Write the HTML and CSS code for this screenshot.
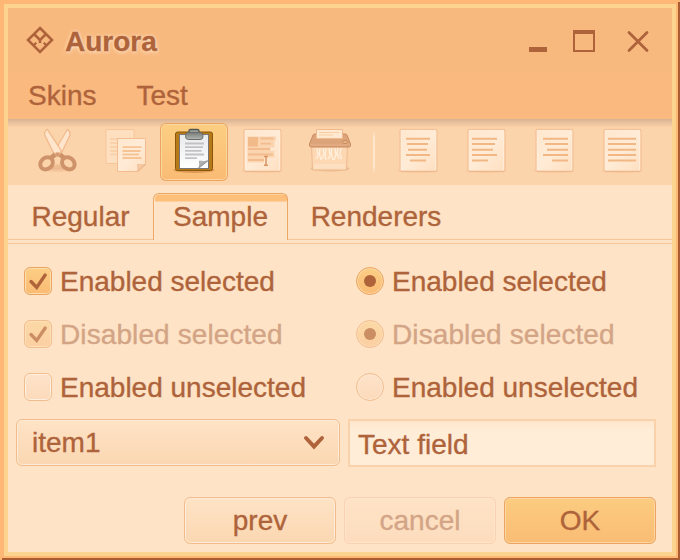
FILE: index.html
```html
<!DOCTYPE html>
<html lang="en">
<head>
<meta charset="utf-8">
<title>Aurora</title>
<link rel="stylesheet" href="styles.css">
</head>
<body>
<div class="window">
<div class="frame">
  <header class="header">
    <div class="titlebar">
      <svg class="logo" width="28" height="28" viewBox="0 0 28 28" fill="none" stroke="#ae633b" stroke-width="2.6">
        <path d="M14 2 26 14 14 26 2 14Z"/><path d="M8 8 14 14 20 8M14 13v4"/><path d="M7.500 19.500 10.300 16.800M20.500 19.500 17.700 16.800" stroke-width="2.200"/>
      </svg>
      <h1 class="title">Aurora</h1>
      <svg class="controls" width="124" height="28" viewBox="0 0 124 28" fill="none" stroke="#ae633b">
        <path d="M1 21.500H19" stroke-width="5"/>
        <path d="M46 3.500V23H66V3.500" stroke-width="2"/><path d="M45 4H67" stroke-width="4"/>
        <path d="M101 4.500 119 22.500M119 4.500 101 22.500" stroke-width="2.800" stroke-linecap="round"/>
      </svg>
    </div>
    <nav class="menu"><span>Skins</span><span>Test</span></nav>
  </header>

  <svg width="0" height="0" class="defs">
    <defs>
      <linearGradient id="page" x1="0" y1="0" x2="1" y2="1"><stop offset="0" stop-color="#ffe7ce"/><stop offset=".5" stop-color="#ffebd6"/><stop offset="1" stop-color="#fedfbf"/></linearGradient>
      <linearGradient id="white" x1="0" y1="0" x2="0" y2="1"><stop offset="0" stop-color="#e9eaec"/><stop offset="1" stop-color="#fff"/></linearGradient>
      <linearGradient id="metal" x1="0" y1="0" x2="0" y2="1"><stop offset="0" stop-color="#777a77"/><stop offset="1" stop-color="#b4b8b4"/></linearGradient>
      <linearGradient id="curl" x1="0" y1="0" x2="1" y2="1"><stop offset="0" stop-color="#fbd9b5"/><stop offset="1" stop-color="#e9ae7d"/></linearGradient>
      <linearGradient id="steel" x1="0" y1="0" x2="1" y2="1"><stop offset="0" stop-color="#c9cbc9"/><stop offset="1" stop-color="#777"/></linearGradient>
      <g id="sheet">
        <ellipse cx="34" cy="47.500" rx="20" ry="2" fill="#edba8f" opacity=".6"/>
        <rect x="16" y="6.500" width="37" height="42" rx="1.500" fill="url(#page)" stroke="#f5c297" stroke-width="1.300"/>
        <path d="M17.500 7.500h34v40h-34z" fill="none" stroke="#fff0df" opacity=".7"/>
        <path d="M17 48.200h35" stroke="#edb485"/>
      </g>
    </defs>
  </svg>
  <div class="toolbar">
    <div class="tool"><svg viewBox="0 0 68 58">
      <ellipse cx="34" cy="46" rx="16" ry="3" fill="#eebb91" opacity=".45"/><path d="M26 47q8-12 16 0z" fill="#e9b288" opacity=".6"/>
      <path d="M43.500 6.300Q46.500 8.500 46 12L38 29 34 32 30 29Z" fill="#fee5cb" stroke="#f0b98b" stroke-width="1.200"/>
      <path d="M23.300 6.300Q20 8.500 20.800 12L29 29 33.500 32 37.500 28Z" fill="#fee5cb" stroke="#f0b98b" stroke-width="1.200"/>
      <path d="M26 36 31 31.500M36 31.500 41 36" fill="none" stroke="#cd9169" stroke-width="4.500"/>
      <circle cx="33.500" cy="31.500" r="2.200" fill="#d59a72"/>
      <ellipse cx="22.600" cy="40.300" rx="6.800" ry="5.600" transform="rotate(-40 22.600 40.300)" fill="none" stroke="#ce936b" stroke-width="4"/>
      <ellipse cx="44.300" cy="40.300" rx="6.800" ry="5.600" transform="rotate(40 44.300 40.300)" fill="none" stroke="#ce936b" stroke-width="4"/>
    </svg></div>
    <div class="tool"><svg viewBox="0 0 68 58">
      <rect x="14" y="6.500" width="28" height="34" rx="1" fill="#fedfbf" stroke="#f7c59a"/>
      <path d="M18 16h20M18 20h20M18 24h20M18 28h20M18 31.500h20" stroke="#f9cda3" stroke-width="1.500"/>
      <path d="M25.500 15.500h28v26l-8 7h-20z" fill="url(#page)" stroke="#f3bd8f"/>
      <path d="M30.500 24.200h19M30.500 28h18M30.500 31.500h16.500M30.500 35h19" stroke="#f6c395" stroke-width="1.800"/>
      <path d="M45.500 48.500q1.500-3 0-7 4 1 8 0z" fill="url(#curl)" stroke="#e9b083" stroke-width=".8"/>
    </svg></div>
    <div class="tool active"><svg viewBox="0 0 68 58">
      <ellipse cx="34" cy="47" rx="20.500" ry="3" fill="#ce8544" opacity=".65"/>
      <rect x="15.500" y="9" width="37" height="38.500" rx="2" fill="#b87918" stroke="#885709"/>
      <rect x="19.500" y="11.500" width="29" height="34" fill="url(#white)" stroke="#777"/>
      <path d="M25 20.500h19M25 24.200h18M25 27.800h16.500M25 31.500h19M25 35.200h12" stroke="#c2c2c4" stroke-width="1.800"/>
      <path d="M38.500 45.500Q40.500 42 39.500 38q4.500 1.500 9-.5z" fill="url(#steel)" stroke="#888" stroke-width=".6"/>
      <path d="M29 11V8q0-1.500 1.500-1.500h7Q39 6.500 39 8v3" fill="#9b9f9b" stroke="#555a55" stroke-width="1.400"/>
      <rect x="25.500" y="9.500" width="17.500" height="7" rx="3" fill="url(#metal)" stroke="#686c67"/>
    </svg></div>
    <div class="tool"><svg viewBox="0 0 68 58">
      <use href="#sheet"/>
      <path d="M19.500 13.500h28.500v4h-1.500v7h-4v3.500h4v6.500H36v5H19.500z" fill="#fbd5b0"/>
      <rect x="20" y="14" width="10" height="9.500" fill="#f2b989"/>
      <path d="M32.500 15.500h13M32.500 20.700h10.500M20 26h22M20 31.500h25M20 37h16" stroke="#f2bc8e" stroke-width="1.800"/>
      <path d="M36 33.500h4M38 34v8M36 42.300h4" stroke="#d99565" stroke-width="1.500"/>
    </svg></div>
    <div class="tool"><svg viewBox="0 0 68 58">
      <ellipse cx="34" cy="45.500" rx="19.500" ry="3" fill="#dc9d70" opacity=".45"/>
      <path d="M15.500 22h36l-1 25h-34z" fill="#fdd8b3" stroke="#edbb90"/>
      <path d="M18 41h31v4.500H18z" fill="#fce0c1"/>
      <path d="M17 12q.5-1 2-1h30q1.500 0 2 1l3.500 9q.5 3-1.500 3H15q-2 0-1.500-3z" fill="#dda47a" stroke="#c98b61"/>
      <path d="M14 22h40" stroke="#e5b088"/>
      <path d="M20.500 15.500v-9h26v9z" fill="#ffe9d1" stroke="#efb98d"/>
      <path d="M23 9.500h20M23 12h14" stroke="#f9cda4" stroke-width="1.200"/>
      <ellipse cx="49" cy="19" rx="2.500" ry="1.600" fill="#e8b58c" stroke="#c48457" stroke-width=".8"/>
      <path d="M21 25l1 7-1.500 4M24 25l-.5 6 1.500 6M27 25l1 6-2 5M30 25l-1 7 1 5M33 25l1 8-2 3M36 25l-1 5 2 7M39 25l1 7-2 5M42 25l-1 5 2 6M45 25l-1 6 1.500 5" fill="none" stroke="#ffefdd" stroke-width="1.400"/>
    </svg></div>
    <div class="separator"></div>
    <div class="tool"><svg viewBox="0 0 68 58"><use href="#sheet"/>
      <path class="rules" d="M22 15.700h24M23 21h21M24 26.700h19M22 32h24M26 37.500h16"/></svg></div>
    <div class="tool"><svg viewBox="0 0 68 58"><use href="#sheet"/>
      <path class="rules" d="M20 15.700h25M20 21h23M20 26.700h21M20 32h25M20 37.500h16"/></svg></div>
    <div class="tool"><svg viewBox="0 0 68 58"><use href="#sheet"/>
      <path class="rules" d="M23 15.700h25M25 21h23M27 26.700h21M23 32h25M32 37.500h16"/></svg></div>
    <div class="tool"><svg viewBox="0 0 68 58"><use href="#sheet"/>
      <path class="rules" d="M20 15.700h28M20 21h28M20 26.700h28M20 32h28M20 37.500h28"/></svg></div>
  </div>

  <div class="tabs">
    <div class="tab first">Regular</div>
    <div class="tab selected">Sample</div>
    <div class="tab last">Renderers</div>
  </div>

  <main class="content">
    <div class="options">
      <div class="option"><span class="mark check on"><svg viewBox="0 0 28 28"><path d="M7 14.500 12.700 20.500 21.200 8"/></svg></span>Enabled selected</div>
      <div class="option"><span class="mark radio on"><i></i></span>Enabled selected</div>
      <div class="option disabled"><span class="mark check on"><svg viewBox="0 0 28 28"><path d="M7 14.500 12.700 20.500 21.200 8"/></svg></span>Disabled selected</div>
      <div class="option disabled"><span class="mark radio on"><i></i></span>Disabled selected</div>
      <div class="option"><span class="mark check"></span>Enabled unselected</div>
      <div class="option"><span class="mark radio"></span>Enabled unselected</div>
    </div>
    <div class="fields">
      <div class="box combo"><span>item1</span><svg width="24" height="16" viewBox="0 0 24 16"><path d="M4 3 12 11.500 20 3" fill="none" stroke="#ae633b" stroke-width="4" stroke-linecap="round"/></svg></div>
      <div class="textfield">Text field</div>
    </div>
    <div class="buttons">
      <div class="box button">prev</div>
      <div class="box button off">cancel</div>
      <div class="box button primary">OK</div>
    </div>
  </main>
</div>
</div>
</body>
</html>
```
FILE: styles.css
```css
* { box-sizing: border-box; }
body {
  margin: 0;
  width: 680px;
  height: 560px;
  overflow: hidden;
  background: #ffb775;
  color: #ae633b;
  font: 28px/32px "Liberation Sans", Arial, sans-serif;
  -webkit-text-stroke: .35px currentColor;
}
.window {
  width: 680px;
  height: 560px;
  padding: 4px 2px 2px 4px;
  background: linear-gradient(#ac5c33, #ac5c33) 678px 2px / 2px 558px no-repeat,
    linear-gradient(#ac5c33, #ac5c33) 2px 558px / 678px 2px no-repeat, #ffb775;
}
.frame {
  width: 672px;
  height: 552px;
  border: 4px solid #fdd48f;
  background: #fee3c6;
}
.header { height: 111px; background: #f9b97f; }
.titlebar {
  height: 63px;
  display: flex;
  align-items: center;
  padding: 0 20px 0 18px;
  background: #f8b97f;
}
.title {
  flex: 1;
  margin: 5px 0 0 11px;
  font-size: 28px;
  line-height: 32px;
  font-weight: bold;
  text-shadow: 0 0 3px #ffe3c6, 0 1px 4px #ffe3c6;
}
.controls { margin-top: 4px; }
.menu { display: flex; gap: 40px; padding: 9px 20px 0; }
.defs { display: block; }
.toolbar {
  display: flex;
  height: 66px;
  padding: 4px 16px 4px;
  background: linear-gradient(#d8b394, #fbd1a8) 0 0 / 100% 8px no-repeat, #fcd4ac;
}
.tool { width: 68px; height: 58px; }
.tool svg { display: block; width: 68px; height: 58px; }
.tool.active {
  border-radius: 6px;
  background: linear-gradient(#fccf82, #fabb74);
  box-shadow: inset 0 0 0 1px #eba561, inset 0 0 0 2px #fcd69f;
}
.separator {
  width: 20px;
  background: linear-gradient(#ffe7ce00, #ffe7ce 20%, #ffe7ce 80%, #ffe7ce00) 9px 7px / 2px 44px no-repeat;
}
.rules { fill: none; stroke: #f1b784; stroke-width: 2; }
.tabs {
  display: flex;
  height: 59px;
  padding-top: 8px;
  background: linear-gradient(#f8c696, #f8c696) 0 54px / 100% 1px no-repeat,
    linear-gradient(#f8c696, #f8c696) 0 58px / 100% 1px no-repeat;
}
.tab { height: 47px; padding-top: 8px; text-align: center; }
.tab.first { width: 145px; }
.tab.last { width: 176px; }
.tab.selected {
  width: 135px;
  border: 1px solid #eba765;
  border-bottom: 0;
  border-radius: 6px 6px 0 0;
  padding-top: 7px;
  background: linear-gradient(#fdd19d 0 1px, #fdbf79 1px 7px, #fee3c6 8px);
  box-shadow: inset 1px 0 #ffe8cf;
}
.content { padding: 23px 16px 0 8px; }
.options { display: grid; grid-template-columns: 332px 308px; row-gap: 25px; padding-left: 8px; }
.option { display: flex; gap: 8px; height: 28px; line-height: 29px; white-space: nowrap; }
.option.disabled { letter-spacing: .1px; }
.mark {
  display: block;
  width: 28px;
  height: 28px;
  border: 1px solid #f1bd8e;
  border-radius: 6px;
  background: linear-gradient(#fee3c9, #fcdabb);
  box-shadow: inset 0 0 0 1px #fff0df;
}
.mark svg { display: block; margin: -1px; width: 28px; height: 28px; fill: none; stroke: #ae633b; stroke-width: 3.3; stroke-linecap: round; }
.radio { border-radius: 50%; box-shadow: inset 0 0 0 1px #feead5; }
.radio i { display: block; width: 12px; height: 12px; margin: 7px; border-radius: 50%; background: #ae633b; }
.on { background: linear-gradient(#fcce84, #fabb74); border-color: #eba561; box-shadow: inset 0 0 0 1px #fddcae; }
.disabled { color: #d3a586; }
.disabled .mark { border-color: #f1bd8e; background: linear-gradient(#fcd9a6, #fbcfa2); box-shadow: inset 0 0 0 1px #fee0b9; }
.disabled .mark svg { stroke: #cb8d64; }
.disabled .mark i { background: #cb8d64; }
.fields { display: grid; grid-template-columns: 324px 308px; gap: 8px; margin-top: 18px; }
.box {
  height: 47px;
  border: 1px solid #f1bd8e;
  border-radius: 6px;
  background: linear-gradient(#fee3c6, #fbd7b1);
  box-shadow: inset 0 0 0 1px #ffebd5;
}
.combo { display: flex; justify-content: space-between; align-items: center; padding: 0 13px 0 15px; }
.textfield {
  height: 48px;
  border: 2px solid #f9d1aa;
  background: linear-gradient(#fee6cc, #ffedd8 10px);
  padding: 8px;
}
.buttons { display: flex; justify-content: flex-end; gap: 8px; margin-top: 30px; }
.button { width: 152px; padding-top: 7px; text-align: center; }
.off { color: #d3a586; border-color: #f9d1ae; background: linear-gradient(#fee3c6, #fddcbd); box-shadow: inset 0 0 0 1px #ffe6ce; }
.primary { border-color: #eba561; background: linear-gradient(#fbcc80, #fabc74); box-shadow: inset 0 0 0 1px #fdd6a3; }
```
